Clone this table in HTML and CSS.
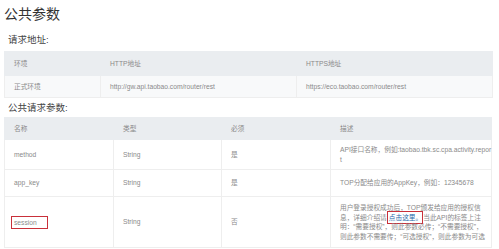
FILE: index.html
```html
<!DOCTYPE html>
<html lang="zh-CN">

<head>
    <meta charset="UTF-8">
    <meta name="viewport" content="width=device-width, initial-scale=1.0">
    <title>公共参数</title>
    <link rel="stylesheet" href="styles.css">
</head>

<body>
    <div class="doc">
        <h1 class="doc-title">公共参数</h1>

        <!-- 请求地址 -->
        <h2 class="doc-subtitle">请求地址:</h2>
        <table class="param-table url-table">
            <colgroup>
                <col class="col-env">
                <col class="col-url">
                <col class="col-url">
            </colgroup>
            <thead>
                <tr>
                    <th>环境</th>
                    <th>HTTP地址</th>
                    <th>HTTPS地址</th>
                </tr>
            </thead>
            <tbody>
                <tr>
                    <td>正式环境</td>
                    <td>http://gw.api.taobao.com/router/rest</td>
                    <td>https://eco.taobao.com/router/rest</td>
                </tr>
            </tbody>
        </table>

        <!-- 公共请求参数 -->
        <h2 class="doc-subtitle second">公共请求参数:</h2>
        <table class="param-table">
            <colgroup>
                <col class="col-name">
                <col class="col-type">
                <col class="col-req">
                <col>
            </colgroup>
            <thead>
                <tr>
                    <th>名称</th>
                    <th>类型</th>
                    <th>必须</th>
                    <th class="desc">描述</th>
                </tr>
            </thead>
            <tbody>
                <tr>
                    <td>method</td>
                    <td>String</td>
                    <td>是</td>
                    <td class="desc">API接口名称，例如:taobao.tbk.sc.cpa.activity.repor<br>t</td>
                </tr>
                <tr class="row-short">
                    <td>app_key</td>
                    <td>String</td>
                    <td>是</td>
                    <td class="desc">TOP分配给应用的AppKey，例如：12345678</td>
                </tr>
                <tr class="row-tall">
                    <td><span class="mark">session</span></td>
                    <td>String</td>
                    <td>否</td>
                    <td class="desc">用户登录授权成功后，TOP颁发给应用的授权信<br>息，详细介绍请<a class="link" href="#">点击这里。</a>当此API的标签上注<br>明：“需要授权”，则此参数必传；“不需要授权”，<br>则此参数不需要传；“可选授权”，则此参数为可选</td>
                </tr>
            </tbody>
        </table>
    </div>
</body>

</html>
```

FILE: styles.css
```css
body {
    margin: 0;
    background-color: #ffffff;
    font-family: 'Liberation Sans', 'Noto Sans CJK SC', sans-serif;
    color: #8a8a8a;
}

.doc {
    padding: 0 7px 0 4px;
}

.doc-title {
    margin: 4px 0 0;
    font-size: 14px;
    line-height: 20px;
    font-weight: 400;
    color: #333333;
}

.doc-subtitle {
    margin: 10px 0 5px 4px;
    font-size: 9.5px;
    line-height: 12px;
    font-weight: 400;
    color: #444444;
}

.doc-subtitle.second {
    margin-top: 4px;
    margin-bottom: 3px;
}

.param-table {
    width: 100%;
    border-collapse: collapse;
    table-layout: fixed;
    font-size: 6.7px;
    line-height: 9.5px;
}

.param-table th,
.param-table td {
    padding: 5px 9px;
    text-align: left;
    vertical-align: middle;
    font-weight: 400;
    color: #8a8a8a;
    border: 1px solid #eeeeee;
}

.param-table .desc {
    padding-right: 3px;
    white-space: nowrap;
}

.param-table th {
    background-color: #eaedf0;
    border-color: #eaedf0;
    height: 11px;
}

.param-table td {
    background-color: #ffffff;
}

.url-table th {
    height: 13px;
}

.url-table td {
    background-color: #f8f9fa;
    height: 11px;
}

.col-env {
    width: 96px;
}

.col-url {
    width: 196px;
}

.col-name {
    width: 109px;
}

.col-type {
    width: 108px;
}

.col-req {
    width: 109px;
}

.row-short td {
    height: 16px;
}

.row-tall td {
    height: 40px;
}

.mark {
    display: inline-block;
    width: 31px;
    margin-left: -3px;
    padding: 1px 2px;
    line-height: 9px;
    border: 1px solid #c9303a;
}

.link {
    padding: 2px 0 2px 1px;
    border: 1px solid #c9303a;
    color: #2766a8;
    text-decoration: none;
}
```
